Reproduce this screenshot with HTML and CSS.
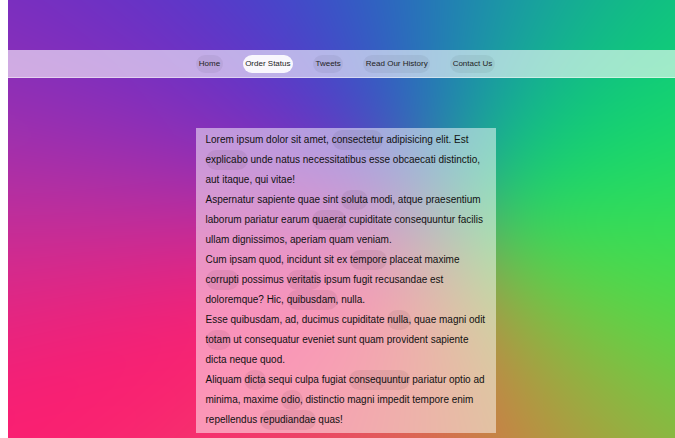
FILE: index.html
```
<!DOCTYPE html>
<html lang="en">
<head>
<meta charset="utf-8">
<title>Lorem</title>
<link rel="stylesheet" href="styles.css">
</head>
<body>
<div class="page">
  <nav class="nav">
    <a class="pill" href="#">Home</a>
    <a class="pill active" href="#">Order Status</a>
    <a class="pill" href="#">Tweets</a>
    <a class="pill" href="#">Read Our History</a>
    <a class="pill" href="#">Contact Us</a>
  </nav>
  <main class="content">
    <p>Lorem ipsum dolor sit amet, <span class="hl">consectetur</span> adipisicing elit. Est <span class="hl">explicabo</span> unde natus necessitatibus esse obcaecati distinctio, aut itaque, qui vitae!</p>
    <p>Aspernatur sapiente quae sint <span class="hl">soluta</span> modi, atque praesentium laborum pariatur earum <span class="hl">quaerat</span> cupiditate consequuntur facilis ullam dignissimos, aperiam quam veniam.</p>
    <p>Cum ipsam quod, incidunt sit ex <span class="hl">tempore</span> placeat maxime <span class="hl">corrupti</span> possimus <span class="hl">veritatis</span> ipsum fugit recusandae est doloremque? Hic, <span class="hl">quibusdam,</span> nulla.</p>
    <p>Esse quibusdam, ad, ducimus cupiditate <span class="hl">nulla,</span> quae magni odit <span class="hl">totam</span> ut consequatur eveniet sunt quam provident sapiente dicta neque quod.</p>
    <p>Aliquam <span class="hl">dicta</span> sequi culpa fugiat <span class="hl">consequuntur</span> pariatur optio ad minima, maxime <span class="hl">odio,</span> distinctio magni impedit tempore enim repellendus <span class="hl">repudiandae</span> quas!</p>
  </main>
</div>
</body>
</html>
```
FILE: styles.css
```
html {
  overflow: hidden;
}

body {
  margin: 0;
  background: #fff;
  font-family: "Liberation Sans", Arial, sans-serif;
}

.page {
  position: relative;
  isolation: isolate;
  overflow: hidden;
  margin-left: 8px;
  width: 100vw;
  min-height: 100vh;
  padding-top: 50px;
  box-sizing: border-box;
  box-shadow: inset 1px 0 0 rgba(255, 255, 255, 0.35);
}

.page::before {
  content: "";
  position: absolute;
  inset: -150px;
  z-index: -1;
  filter: blur(55px);
  background:
    conic-gradient(from 0deg at 58.7% 51.5%,
      #2478b8 0deg,
      #1a98a8 18deg,
      #10c080 45deg,
      #0ed672 62deg,
      #3ee050 95deg,
      #58d845 112deg,
      #8cb840 130deg,
      #c88540 160deg,
      #e06058 188deg,
      #f53070 228deg,
      #ff1a6e 244deg,
      #e22882 261deg,
      #b830a0 274deg,
      #9030b5 287deg,
      #7a2dc0 299deg,
      #5a36ca 315deg,
      #3e4ccc 332deg,
      #2c62c0 348deg,
      #2478b8 360deg);
}

.nav {
  height: 27px;
  background: rgba(255, 255, 255, 0.6);
  border-bottom: 1px solid rgba(255, 255, 255, 0.45);
  display: flex;
  justify-content: center;
  align-items: center;
  gap: 20px;
}

.pill {
  display: block;
  height: 18px;
  line-height: 18px;
  padding: 0 2.5px;
  border-radius: 9px;
  font-size: 8px;
  color: #222;
  text-decoration: none;
  background: rgba(0, 0, 0, 0.05);
}

.pill.active {
  background: rgba(255, 255, 255, 0.9);
}

.content {
  width: 300px;
  box-sizing: border-box;
  margin: 50px auto 0;
  padding: 2px 10px 3px;
  background: rgba(255, 255, 255, 0.5);
  font-size: 10px;
  line-height: 20px;
  color: #111;
}

.content p {
  margin: 0;
}

.hl {
  display: inline-block;
  border-radius: 10px;
  background: rgba(0, 0, 0, 0.06);
}
```
